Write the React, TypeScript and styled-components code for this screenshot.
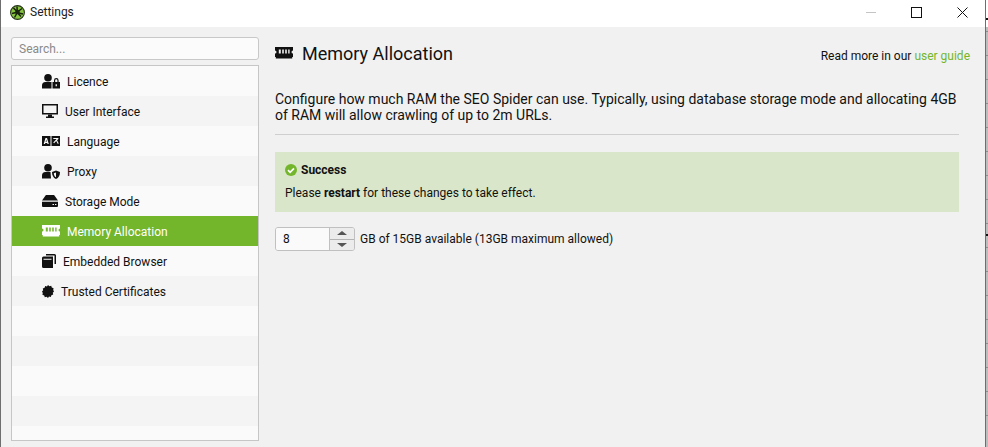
import React from 'react';
import styled, { createGlobalStyle } from 'styled-components';

const GlobalStyle = createGlobalStyle`
  html, body {
    margin: 0;
    padding: 0;
    background: #ffffff;
  }
  body {
    font-family: Roboto, "Liberation Sans", sans-serif;
    color: #111111;
  }
`;

const Screen = styled.div`
  width: 988px;
  height: 447px;
  display: flex;
  overflow: hidden;
  background: #ffffff;
`;

const Window = styled.div`
  width: 986px;
  height: 447px;
  flex: none;
  display: flex;
  flex-direction: column;
  border-left: 1px solid #6e6e6e;
  border-right: 1px solid #6e6e6e;
  box-sizing: border-box;
`;

const TitleBar = styled.div`
  height: 27px;
  flex: none;
  box-sizing: border-box;
  display: flex;
  align-items: center;
  padding: 0 0 3px 9px;
  background: #ffffff;
`;

const TitleText = styled.span`
  margin-left: 5px;
  font-size: 12px;
  color: #222222;
`;

const WindowButtons = styled.div`
  margin-left: auto;
  display: flex;
  align-items: center;
  gap: 35px;
  padding-right: 17px;
`;

const Body = styled.div`
  flex: 1;
  display: flex;
  background: #f1f1f1;
  padding: 10px 0 6px 10px;
  min-height: 0;
`;

const Sidebar = styled.div`
  width: 248px;
  flex: none;
  display: flex;
  flex-direction: column;
  gap: 5px;
`;

const SearchInput = styled.input`
  height: 23px;
  box-sizing: border-box;
  border: 1px solid #c8c8c8;
  border-radius: 3px;
  background: #fbfbfb;
  padding: 0 7px;
  font-family: Roboto, "Liberation Sans", sans-serif;
  font-size: 12px;
  outline: none;
  &::placeholder {
    color: #8a8a8a;
    opacity: 1;
  }
`;

const Nav = styled.div`
  flex: 1;
  border: 1px solid #c6c6c6;
  overflow: hidden;
  min-height: 0;
`;

const NavRow = styled.div<{ $active?: boolean; $odd: boolean }>`
  height: 30px;
  box-sizing: border-box;
  display: flex;
  align-items: center;
  padding: 2px 0 0 30px;
  gap: 7px;
  font-size: 12px;
  background: ${(p) => (p.$active ? '#74b62b' : p.$odd ? '#f4f4f4' : '#fafafa')};
  color: ${(p) => (p.$active ? '#ffffff' : '#111111')};
`;

const IconSlot = styled.span`
  display: flex;
  align-items: center;
  flex: none;
  margin-top: -2px;
`;

const Main = styled.div`
  flex: 1;
  min-width: 0;
  display: flex;
  flex-direction: column;
  padding: 0 26px 0 16px;
`;

const Header = styled.div`
  display: flex;
  align-items: center;
  height: 32px;
`;

const HeaderTitle = styled.h1`
  margin: 0 0 0 9px;
  font-size: 18px;
  font-weight: 400;
  color: #111111;
`;

const GuideNote = styled.div`
  margin: 5px -11px 0 auto;
  font-size: 12px;
`;

const GuideLink = styled.a`
  color: #74b62b;
`;

const Intro = styled.p`
  margin: 22px 0 0;
  font-size: 14px;
  line-height: 16px;
  color: #111111;
  padding-bottom: 11px;
  border-bottom: 1px solid #cfcfcf;
`;

const Notice = styled.div`
  margin-top: 17px;
  height: 60px;
  box-sizing: border-box;
  background: #d9e6ca;
  padding: 10px 10px 0;
  font-size: 12px;
`;

const NoticeHead = styled.div`
  display: flex;
  align-items: center;
  gap: 4px;
  font-weight: 700;
  height: 16px;
`;

const NoticeText = styled.div`
  margin-top: 8px;
`;

const SpinnerRow = styled.div`
  margin-top: 15px;
  display: flex;
  align-items: center;
  gap: 5px;
  font-size: 12px;
`;

const Spinner = styled.div`
  display: flex;
  width: 80px;
  height: 24px;
  box-sizing: border-box;
  border: 1px solid #c0c0c0;
  border-radius: 3px;
  overflow: hidden;
`;

const SpinnerValue = styled.div`
  flex: 1;
  display: flex;
  align-items: center;
  padding-left: 7px;
  background: #fafafa;
`;

const SpinnerButtons = styled.div`
  width: 24px;
  display: flex;
  flex-direction: column;
  border-left: 1px solid #c0c0c0;
  background: #ececec;
`;

const SpinnerButton = styled.div`
  flex: 1;
  display: flex;
  align-items: center;
  justify-content: center;
  & + & {
    border-top: 1px solid #b4b4b4;
  }
`;

const Arrow = styled.span<{ $down?: boolean }>`
  width: 0;
  height: 0;
  border-left: 5px solid transparent;
  border-right: 5px solid transparent;
  ${(p) => (p.$down ? 'border-top: 4px solid #555;' : 'border-bottom: 4px solid #555;')}
`;

/* sliver of the spreadsheet behind the window */
const Edge = styled.div`
  flex: 1;
  position: relative;
  margin-top: 27px;
  background: repeating-linear-gradient(to bottom, #bdbdbd 0, #bdbdbd 23px, #8f8f8f 23px, #8f8f8f 24px) 0 -19px;
`;

const EdgeMark = styled.span<{ $top: number }>`
  position: absolute;
  left: 0;
  top: ${(p) => p.$top}px;
  width: 0;
  height: 0;
  border-left: 2px solid #111;
  border-top: 2px solid #111;
  border-right: 1px solid transparent;
`;

const LicenceIcon = () => (
  <svg width="18" height="15" viewBox="0 0 18 15" fill="currentColor">
    <circle cx="6" cy="3.800" r="3.800" />
    <path d="M0 14.500v-3A3.500 3.500 0 0 1 3.500 8h6v6.500z" />
    <path fillRule="evenodd" d="M10.500 8H18v6.500h-7.500zM13.600 10.300v2h1.300v-2z" />
    <path d="M12 8V6.300a2.300 2.300 0 0 1 4.600 0V8h-1.200V6.300a1.100 1.100 0 0 0-2.200 0V8z" />
  </svg>
);

const MonitorIcon = () => (
  <svg width="16" height="14" viewBox="0 0 16 14" fill="currentColor">
    <path fillRule="evenodd" d="M0 0h16v10.500H0zM1.500 1.500v7.500h13V1.500z" />
    <path d="M6 10.500h4V12.500h2V14H4v-1.500h2z" />
  </svg>
);

const LanguageIcon = () => (
  <svg width="18" height="10" viewBox="0 0 18 10" fill="currentColor">
    <path
      fillRule="evenodd"
      d="M0 0h8.500v10H0zM3.500 2 1.700 8h1.300l.3-1.100h1.900L5.500 8h1.300L5 2zM3.600 5.800l.6-2.300.6 2.300z"
    />
    <path
      fillRule="evenodd"
      d="M9.500 0H18v10H9.500zM11.300 2v1.100h3.300L11.300 6.500l.8.700 2.100-2.100L15.900 8h.5V6.700l-1.400-2.400L16.400 3V2z"
    />
  </svg>
);

const ProxyIcon = () => (
  <svg width="18" height="15" viewBox="0 0 18 15" fill="currentColor">
    <circle cx="6" cy="3.800" r="3.800" />
    <path d="M0 14.500v-3A3.500 3.500 0 0 1 3.500 8h5L9 14.500z" />
    <path fillRule="evenodd" d="M14 6.500l4 1.500c0 3.500-1.300 5.800-4 7-2.700-1.200-4-3.500-4-7zM14 8.400l-2.200.8c.1 2 .8 3.300 2.200 4.100z" />
  </svg>
);

const DriveIcon = () => (
  <svg width="16" height="12" viewBox="0 0 16 12" fill="currentColor">
    <path d="M0 5.600 3 1.200C3.400.500 4 0 4.900 0h6.200c.9 0 1.500.500 1.900 1.200l3 4.400z" />
    <path fillRule="evenodd" d="M0 6.800h16V11a1 1 0 0 1-1 1H1a1 1 0 0 1-1-1zM10.500 9v1H12V9zM13 9v1h1.400V9z" />
  </svg>
);

const MemoryIcon = () => (
  <svg width="18" height="12" viewBox="0 0 18 12" fill="currentColor">
    <path
      fillRule="evenodd"
      d="M0 0h18v3.500a1.500 1.500 0 0 0 0 3V10h-.8v1.500H.8V10H0V6.500a1.500 1.500 0 0 0 0-3zM3.800 2.500v4h2v-4zM7.200 2.500v4h1.600v-4zM10.200 2.500v4h1.600v-4zM13.200 2.500v4h1.400v-4z"
    />
  </svg>
);

const BrowserIcon = () => (
  <svg width="14" height="14" viewBox="0 0 14 14" fill="currentColor">
    <path d="M4 0h8.500A1.500 1.500 0 0 1 14 1.500V10h-1.500V1.500H4z" />
    <path
      fillRule="evenodd"
      d="M0 4a1.500 1.500 0 0 1 1.500-1.500H11V14H1.500A1.500 1.500 0 0 1 0 12.500zM1.500 4.800v1h8v-1z"
    />
  </svg>
);

const BadgeIcon = () => (
  <svg width="12" height="13" viewBox="0 0 12 13" fill="currentColor">
    <path d="M6 0l1.400 1.200L9.200.800l.6 1.800 1.800.6-.4 1.800L12 6.500l-1.200 1.300.4 1.800-1.800.6-.6 1.800-1.800-.4L6 13l-1.400-1.200-1.800.4-.6-1.800-1.800-.6.4-1.800L0 6.500l1.200-1.300-.4-1.800 1.800-.6.6-1.800 1.800.4z" />
  </svg>
);

const CheckCircle = () => (
  <svg width="12" height="12" viewBox="0 0 12 12">
    <circle cx="6" cy="6" r="6" fill="#74b62b" />
    <path d="M3 6.200l2.100 2.100L9 4.300" fill="none" stroke="#ffffff" strokeWidth="1.700" />
  </svg>
);

const SpiderLogo = () => (
  <svg width="15" height="15" viewBox="0 0 15 15">
    <circle cx="7.500" cy="7.500" r="6.900" fill="#86c440" stroke="#26331a" strokeWidth="1.100" />
    <path
      d="M3.500 3l3 3M7 1.500L7.200 6M12 3.500L8 6.500M2 8.500L6 7.500M13 9L8.500 8M7 8l-2.500 4.500M8 8.500l3 3"
      stroke="#18220f"
      strokeWidth="1.500"
      fill="none"
    />
    <circle cx="7.500" cy="7" r="2.300" fill="#18220f" />
  </svg>
);

const MinimizeGlyph = () => (
  <svg width="10" height="11" viewBox="0 0 10 11">
    <path d="M0 5.500h10" stroke="#c4c4c4" strokeWidth="1" />
  </svg>
);

const MaximizeGlyph = () => (
  <svg width="11" height="11" viewBox="0 0 11 11">
    <rect x=".5" y=".5" width="10" height="10" fill="none" stroke="#111" strokeWidth="1" />
  </svg>
);

const CloseGlyph = () => (
  <svg width="11" height="11" viewBox="0 0 11 11">
    <path d="M.5.500l10 10M10.500.500l-10 10" stroke="#111" strokeWidth="1" />
  </svg>
);

const items: { label: string; icon?: React.ReactNode; active?: boolean }[] = [
  { label: 'Licence', icon: <LicenceIcon /> },
  { label: 'User Interface', icon: <MonitorIcon /> },
  { label: 'Language', icon: <LanguageIcon /> },
  { label: 'Proxy', icon: <ProxyIcon /> },
  { label: 'Storage Mode', icon: <DriveIcon /> },
  { label: 'Memory Allocation', icon: <MemoryIcon />, active: true },
  { label: 'Embedded Browser', icon: <BrowserIcon /> },
  { label: 'Trusted Certificates', icon: <BadgeIcon /> },
  { label: '' },
  { label: '' },
  { label: '' },
  { label: '' },
  { label: '' },
];

export default function App() {
  return (
    <Screen>
      <GlobalStyle />
      <Window>
        <TitleBar>
          <SpiderLogo />
          <TitleText>Settings</TitleText>
          <WindowButtons>
            <MinimizeGlyph />
            <MaximizeGlyph />
            <CloseGlyph />
          </WindowButtons>
        </TitleBar>
        <Body>
          <Sidebar>
            <SearchInput placeholder="Search..." readOnly />
            <Nav>
              {items.map((item, i) => (
                <NavRow key={i} $active={item.active} $odd={i % 2 === 1}>
                  {item.icon && <IconSlot>{item.icon}</IconSlot>}
                  {item.label && <span>{item.label}</span>}
                </NavRow>
              ))}
            </Nav>
          </Sidebar>
          <Main>
            <Header>
              <MemoryIcon />
              <HeaderTitle>Memory Allocation</HeaderTitle>
              <GuideNote>
                Read more in our <GuideLink>user guide</GuideLink>
              </GuideNote>
            </Header>
            <Intro>
              Configure how much RAM the SEO Spider can use. Typically, using database storage mode and allocating 4GB
              <br />
              of RAM will allow crawling of up to 2m URLs.
            </Intro>
            <Notice>
              <NoticeHead>
                <CheckCircle />
                Success
              </NoticeHead>
              <NoticeText>
                Please <b>restart</b> for these changes to take effect.
              </NoticeText>
            </Notice>
            <SpinnerRow>
              <Spinner>
                <SpinnerValue>8</SpinnerValue>
                <SpinnerButtons>
                  <SpinnerButton>
                    <Arrow />
                  </SpinnerButton>
                  <SpinnerButton>
                    <Arrow $down />
                  </SpinnerButton>
                </SpinnerButtons>
              </Spinner>
              GB of 15GB available (13GB maximum allowed)
            </SpinnerRow>
          </Main>
        </Body>
      </Window>
      <Edge>
        <EdgeMark $top={-9} />
        <EdgeMark $top={207} />
      </Edge>
    </Screen>
  );
}
